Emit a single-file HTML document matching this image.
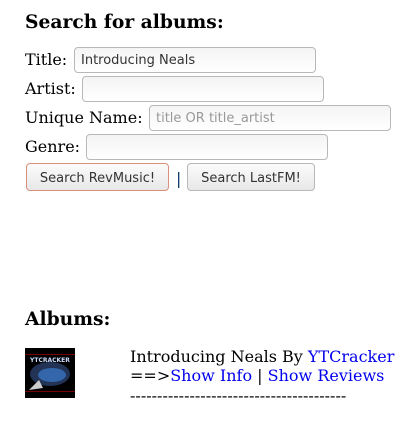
<!DOCTYPE html>
<html><head><style>
body{margin:0;width:401px;height:430px;background:#fff;font-family:"DejaVu Serif","Liberation Serif",serif;font-size:16px;color:#000;position:relative;overflow:hidden}
.a{position:absolute;white-space:nowrap}
h2{position:absolute;margin:0;font-size:18.7px;font-weight:bold;white-space:nowrap}
.in{position:absolute;border:1px solid #b8b8b8;border-radius:4px;background:linear-gradient(#f4f4f4,#fff);font-family:"DejaVu Sans","Liberation Sans",sans-serif;font-size:13px;line-height:26px;padding-left:6px;box-sizing:border-box;width:242px;height:26px}
.btn{position:absolute;height:28px;border:1px solid #b8b8b8;border-radius:4px;background:linear-gradient(#fbfbfb,#e8e8e8);font-family:"DejaVu Sans","Liberation Sans",sans-serif;font-size:13px;line-height:30px;text-align:center;color:#333;box-sizing:border-box}
a{color:#00e;text-decoration:none}
</style></head><body>
<h2 style="left:25px;top:11px">Search for albums:</h2>
<div class="a" style="left:25px;top:50px">Title:</div>
<div class="in" style="left:74px;top:47px;color:#333">Introducing Neals</div>
<div class="a" style="left:25px;top:79px">Artist:</div>
<div class="in" style="left:82px;top:76px"></div>
<div class="a" style="left:25px;top:108px">Unique Name:</div>
<div class="in" style="left:149px;top:105px;color:#999">title OR title_artist</div>
<div class="a" style="left:25px;top:137px">Genre:</div>
<div class="in" style="left:86px;top:134px"></div>
<div class="btn" style="left:26px;top:163px;width:143px;border-color:#d9907a">Search RevMusic!</div>
<div class="a" style="left:176px;top:169px;color:#036">|</div>
<div class="btn" style="left:187px;top:163px;width:128px">Search LastFM!</div>
<h2 style="left:25px;top:308px">Albums:</h2>
<svg class="a" style="left:25px;top:348px" width="50" height="50" viewBox="0 0 50 50">
<rect width="50" height="50" fill="#000"/>
<rect x="0" y="6" width="50" height="1" fill="#700"/>
<rect x="0" y="43" width="50" height="1" fill="#700"/>
<ellipse cx="25" cy="26" rx="20" ry="12" fill="#235"/>
<ellipse cx="27" cy="27" rx="14" ry="7" fill="#36a"/>
<text x="5" y="14" font-size="6" fill="#cdf" font-family="DejaVu Sans" font-weight="bold">YTCRACKER</text>
<path d="M4 42 L14 32 L18 40Z" fill="#ccc"/>
</svg>
<div class="a" style="left:130px;top:347px">Introducing Neals By <a>YTCracker</a></div>
<div class="a" style="left:130px;top:366px">==&gt;<a>Show Info</a> | <a>Show Reviews</a></div>
<div class="a" style="left:130px;top:386px">----------------------------------------</div>
</body></html>
